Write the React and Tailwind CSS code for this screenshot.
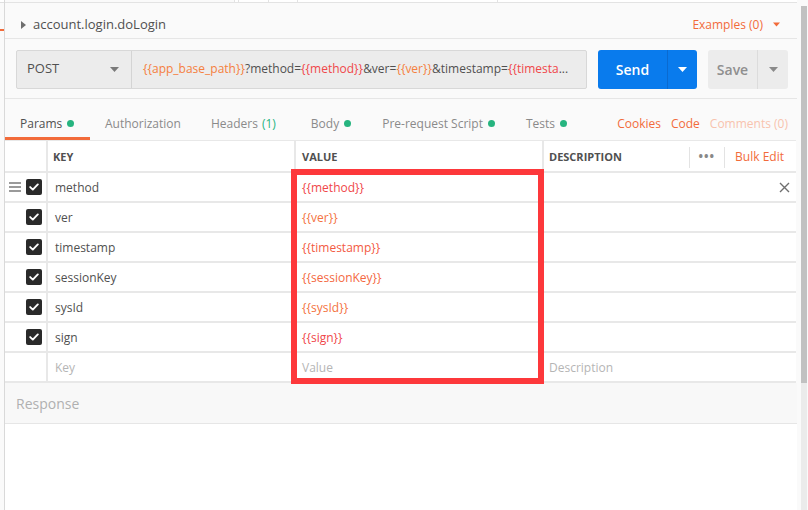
import React from "react";

const rows = [
  { key: "method", value: "method", color: "#f0474a" },
  { key: "ver", value: "ver", color: "#f4733f" },
  { key: "timestamp", value: "timestamp", color: "#f35a43" },
  { key: "sessionKey", value: "sessionKey", color: "#f4693f" },
  { key: "sysId", value: "sysId", color: "#f4733f" },
  { key: "sign", value: "sign", color: "#f0474a" },
];

const Dot = () => (
  <span className="inline-block w-[7px] h-[7px] rounded-full bg-[#26b47f] ml-[5px]" />
);

const Check = () => (
  <span className="w-4 h-4 rounded-[2px] bg-[#2a2a2a] flex items-center justify-center">
    <svg width="10" height="8" viewBox="0 0 10 8">
      <path
        d="M1.2 4.1l2.6 2.5L8.8 1.4"
        stroke="white"
        strokeWidth="1.9"
        fill="none"
        strokeLinecap="round"
        strokeLinejoin="round"
      />
    </svg>
  </span>
);

const Caret = ({ color, w = 9, h = 5 }) => (
  <svg width={w} height={h} viewBox="0 0 9 5">
    <path d="M0 0h9L4.5 5z" fill={color} />
  </svg>
);

const App = () => {
  return (
    <div className="relative w-[808px] h-[510px] bg-[#fafafa] flex overflow-hidden font-['Open_Sans',sans-serif] text-[#505050]">
      {/* left edge */}
      <div className="w-[5px] flex flex-col border-r border-[#d9d9d9] bg-[#fafafa]">
        <div className="h-[3px] bg-white border-b border-[#e0e0e0]" />
        <div className="mt-[26px] h-[2px] w-[4px] bg-[#f26b3a]" />
      </div>

      {/* main panel */}
      <div className="w-[792px] flex flex-col">
        {/* tab strip remnant */}
        <div className="h-[3px] flex border-b border-[#e3e3e3]">
          <div className="w-[229px]" />
          <div className="w-[5px] border-l border-r border-[#e3e3e3] bg-white" />
          <div className="w-[30px] border-r border-[#e3e3e3] bg-white" />
          <div className="w-[29px] border-r border-[#e3e3e3] bg-white" />
          <div className="w-[200px] border-r border-[#e3e3e3] bg-white" />
          <div className="flex-1 bg-white" />
        </div>

        {/* request name */}
        <div className="h-[36px] flex items-center border-b border-[#e6e6e6] pt-[8px] pl-[16px] pr-[17px]">
          <svg width="5" height="8" viewBox="0 0 5 8" className="mr-[7px]">
            <path d="M0 0l5 4-5 4z" fill="#6f6f6f" />
          </svg>
          <span className="text-[13px] text-[#505050]">account.login.doLogin</span>
          <div className="ml-auto flex items-center gap-[10px] text-[12px] text-[#f26b3a]">
            <span>Examples (0)</span>
            <Caret color="#f26b3a" w={7} h={5} />
          </div>
        </div>

        {/* url bar */}
        <div className="h-[60px] flex items-center border-b border-[#e6e6e6] pt-[1px] pl-[11px] pr-[9px]">
          <div className="h-[39px] w-[571px] flex border border-[#d8d8d8] rounded-[2px] bg-[#ececec]">
            <div className="w-[115px] flex items-center pl-[10px] pr-[12px] border-r border-[#d4d4d4]">
              <span className="text-[13px] text-[#505050]">POST</span>
              <span className="ml-auto">
                <Caret color="#7a7a7a" />
              </span>
            </div>
            <div className="flex-1 min-w-0 flex items-center pl-[11px]">
              <span className="whitespace-nowrap text-[12px] text-[#505050]">
                <span className="text-[#f5803e]">{"{{app_base_path}}"}</span>
                ?method=
                <span className="text-[#f0474a]">{"{{method}}"}</span>
                &ver=
                <span className="text-[#f5803e]">{"{{ver}}"}</span>
                &timestamp=
                <span className="text-[#f0474a]">{"{{timesta"}</span>
                ...
              </span>
            </div>
          </div>
          <div className="ml-[11px] h-[39px] w-[99px] flex rounded-[3px] bg-[#097bed] text-white">
            <div className="w-[69px] flex items-center justify-center text-[14px] font-semibold">
              Send
            </div>
            <div className="flex-1 flex items-center justify-center border-l border-[#0a6ad0]">
              <Caret color="white" />
            </div>
          </div>
          <div className="ml-[11px] h-[39px] w-[80px] flex rounded-[3px] bg-[#ececec]">
            <div className="w-[49px] flex items-center justify-center text-[14px] font-semibold text-[#8f8f8f]">
              Save
            </div>
            <div className="flex-1 flex items-center justify-center border-l border-[#dcdcdc]">
              <Caret color="#8a8a8a" />
            </div>
          </div>
        </div>

        {/* tabs */}
        <div className="h-[41px] flex items-stretch text-[12px] text-[#8a8a8a]">
          <div className="w-[85px] flex items-center pl-[15px] pt-[11px] border-b-[3px] border-[#f26b3a] text-[#505050]">
            Params
            <Dot />
          </div>
          <div className="flex items-center pl-[15px] pt-[11px] pb-[3px]">Authorization</div>
          <div className="flex items-center pl-[30px] pt-[11px] pb-[3px]">
            Headers <span className="ml-[4px] text-[#26b47f]">(1)</span>
          </div>
          <div className="flex items-center pl-[35px] pt-[11px] pb-[3px]">
            Body
            <Dot />
          </div>
          <div className="flex items-center pl-[31px] pt-[11px] pb-[3px]">
            Pre-request Script
            <Dot />
          </div>
          <div className="flex items-center pl-[31px] pt-[11px] pb-[3px]">
            Tests
            <Dot />
          </div>
          <div className="ml-auto flex items-center gap-[10px] pr-[9px] pt-[11px] pb-[3px]">
            <span className="text-[#f26b3a]">Cookies</span>
            <span className="text-[#f26b3a]">Code</span>
            <span className="text-[#f8c3ae]">Comments (0)</span>
          </div>
        </div>

        {/* params table */}
        <div className="grid grid-cols-[41px_246px_246px_1fr] gap-[2px] bg-[#e8e8e8] pt-[1px] pb-[2px] mr-[1px]">
          <div className="bg-white h-[30px]" />
          <div className="bg-white flex items-center pl-[5px] pt-[2px] text-[11px] font-bold text-[#505050]">KEY</div>
          <div className="bg-white flex items-center pl-[6px] pt-[2px] text-[11px] font-bold text-[#505050]">VALUE</div>
          <div className="bg-white flex items-center pl-[5px] pt-[2px] text-[11px] font-bold text-[#505050]">
            DESCRIPTION
            <div className="ml-auto flex items-center h-[21px] border-l border-r border-[#e3e3e3] px-[9px] text-[#888] text-[12px] tracking-[1px] leading-none">
              •••
            </div>
            <span className="pl-[10px] pr-[12px] text-[12px] font-normal text-[#f26b3a]">Bulk Edit</span>
          </div>

          {rows.map((r, i) => (
            <React.Fragment key={r.key}>
              <div className="bg-white h-[28px] flex items-center justify-end pr-[4px] gap-[5px]">
                {i === 0 && (
                  <svg width="12" height="10" viewBox="0 0 12 10">
                    <path d="M0 1h12M0 5h12M0 9h12" stroke="#7a7a7a" strokeWidth="1.4" />
                  </svg>
                )}
                <Check />
              </div>
              <div className="bg-white flex items-center pl-[7px] pt-[1px] text-[12px] text-[#505050]">{r.key}</div>
              <div className="bg-white flex items-center pl-[6px] pt-[1px] text-[12px]" style={{ color: r.color }}>
                {"{{" + r.value + "}}"}
              </div>
              <div className="bg-white flex items-center justify-end pr-[6px]">
                {i === 0 && (
                  <svg width="11" height="11" viewBox="0 0 11 11">
                    <path d="M1 1l9 9M10 1l-9 9" stroke="#6f6f6f" strokeWidth="1.4" />
                  </svg>
                )}
              </div>
            </React.Fragment>
          ))}

          <div className="bg-white h-[28px]" />
          <div className="bg-white flex items-center pl-[7px] pt-[1px] text-[12px] text-[#b5b5b5]">Key</div>
          <div className="bg-white flex items-center pl-[6px] pt-[1px] text-[12px] text-[#b5b5b5]">Value</div>
          <div className="bg-white flex items-center pl-[5px] pt-[1px] text-[12px] text-[#b5b5b5]">Description</div>
        </div>

        {/* response */}
        <div className="h-[41px] flex items-center pl-[11px] border-b border-[#e6e6e6] bg-[#f8f8f8] text-[14px] text-[#b0b0b0]">
          Response
        </div>
        <div className="flex-1 bg-white" />
      </div>

      {/* scrollbar */}
      <div className="ml-[4px] w-[6px] flex flex-col">
        <div className="h-[6px]" />
        <div className="h-[377px] bg-[#c1c1c1]" />
        <div className="flex-1 bg-[#ebebeb]" />
      </div>

      {/* highlight annotation */}
      <div className="absolute left-[291px] top-[169px] w-[253px] h-[215px] border-[6px] border-[#fd383b]" />
    </div>
  );
};

export default App;
